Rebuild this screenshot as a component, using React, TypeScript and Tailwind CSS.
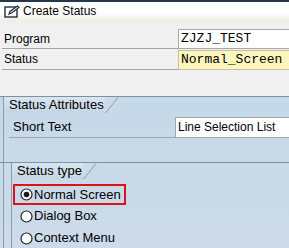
import React from "react";

const Tab: React.FC<{ label: string; width: number; size?: string }> = ({ label, width }) => (
  <div className="flex h-[16px]">
    <div
      className="h-[16px] pl-[5px] leading-[15px] text-[13px] bg-gradient-to-b from-[#d9e6f0] to-[#c3d5e3] border-l border-[#8a9aac]"
      style={{ width }}
    >
      {label}
    </div>
    <svg width="14" height="16" viewBox="0 0 14 16" className="block">
      <polygon points="0,0 13,0 0,16" fill="#cbdbe7" />
      <line x1="13" y1="0.5" x2="0.5" y2="16" stroke="#8a9aac" strokeWidth="1" />
    </svg>
  </div>
);

const Radio: React.FC<{ label: string; checked?: boolean; className: string }> = ({ label, checked, className }) => (
  <div className={"flex items-center gap-[1px] " + className}>
    <svg width="13" height="13" viewBox="0 0 13 13">
      <circle cx="6.5" cy="6.5" r="5.5" fill="#ffffff" stroke="#222222" strokeWidth="1.2" />
      {checked && <circle cx="6.5" cy="6.5" r="2.8" fill="#1b1b1b" />}
    </svg>
    <span className="text-[13px]">{label}</span>
  </div>
);

export default function App() {
  return (
    <div className="w-[289px] h-[248px] overflow-hidden bg-[#f0f0f0] font-['Liberation_Sans',Arial,sans-serif] text-[12px] text-black">
      {/* Title bar */}
      <div className="h-[22px] border-t-2 border-[#23384d] bg-gradient-to-b from-white via-white to-[#f2ebe3] flex items-start pt-[2px] pl-[4px] gap-[3px]">
        <svg width="16" height="14" viewBox="0 0 16 14" className="mt-[1px]">
          <rect x="1" y="2" width="12" height="10" fill="none" stroke="#1d2d4a" strokeWidth="1.4" />
          <path d="M5 9 L6 6.5 L13.5 1 L15 2.5 L7.5 8 Z" fill="#ffffff" stroke="#1d2d4a" strokeWidth="1.2" />
        </svg>
        <span className="text-[12px] leading-[15px]">Create Status</span>
      </div>

      {/* Program / Status */}
      <div className="pt-[7px] flex flex-col gap-[1px]">
        <div className="flex h-[20px]">
          <div className="ml-[2px] w-[176px] border-b border-[#a4a4a4] pl-[2px] leading-[20px] text-[12px]">Program</div>
          <div className="flex-1 bg-white border border-[#a7a7a7] border-r-0 pl-[2px] leading-[18px] font-['Liberation_Mono',monospace] text-[13px]">
            ZJZJ_TEST
          </div>
        </div>
        <div className="flex h-[20px]">
          <div className="ml-[2px] w-[176px] border-b border-[#a4a4a4] pl-[2px] leading-[18px] text-[12px]">Status</div>
          <div className="flex-1 bg-[#fff6bd] border border-[#c4c0a0] border-r-0 pl-[2px] leading-[18px] font-['Liberation_Mono',monospace] text-[13px]">
            Normal_Screen
          </div>
        </div>
      </div>

      {/* Status Attributes panel */}
      <div className="mt-[26px] border-t border-[#7f90a3] bg-gradient-to-b from-[#c6d9e8] to-[#cfdbea] h-[200px]">
        <div className="ml-[3px]">
          <Tab label="Status Attributes" width={102} />
        </div>
        <div className="ml-[3px] border-l border-[#8a9aac] pt-[4px]">
          <div className="flex h-[21px]">
            <div className="ml-[5px] w-[166px] border-b border-[#9aa6b2] pl-[4px] leading-[20px] text-[13px]">Short Text</div>
            <div className="flex-1 bg-white border border-[#a7a7a7] border-r-0 pl-[2px] leading-[19px]">
              Line Selection List
            </div>
          </div>

          <div className="mt-[24px] -ml-[4px] border-t border-[#7f90a3]">
            <div className="ml-[11px]">
              <Tab label="Status type" width={72} />
            </div>
            <div className="ml-[11px] border-l border-[#8a9aac] pt-[5px] pb-[10px]">
              <div className="ml-[1px] w-[113px] h-[21px] border-2 border-[#d8141c]">
                <Radio label="Normal Screen" checked className="h-[17px] pl-[5px]" />
              </div>
              <Radio label="Dialog Box" className="h-[22px] pl-[8px]" />
              <Radio label="Context Menu" className="h-[22px] pl-[8px]" />
            </div>
          </div>
        </div>
      </div>
    </div>
  );
}
